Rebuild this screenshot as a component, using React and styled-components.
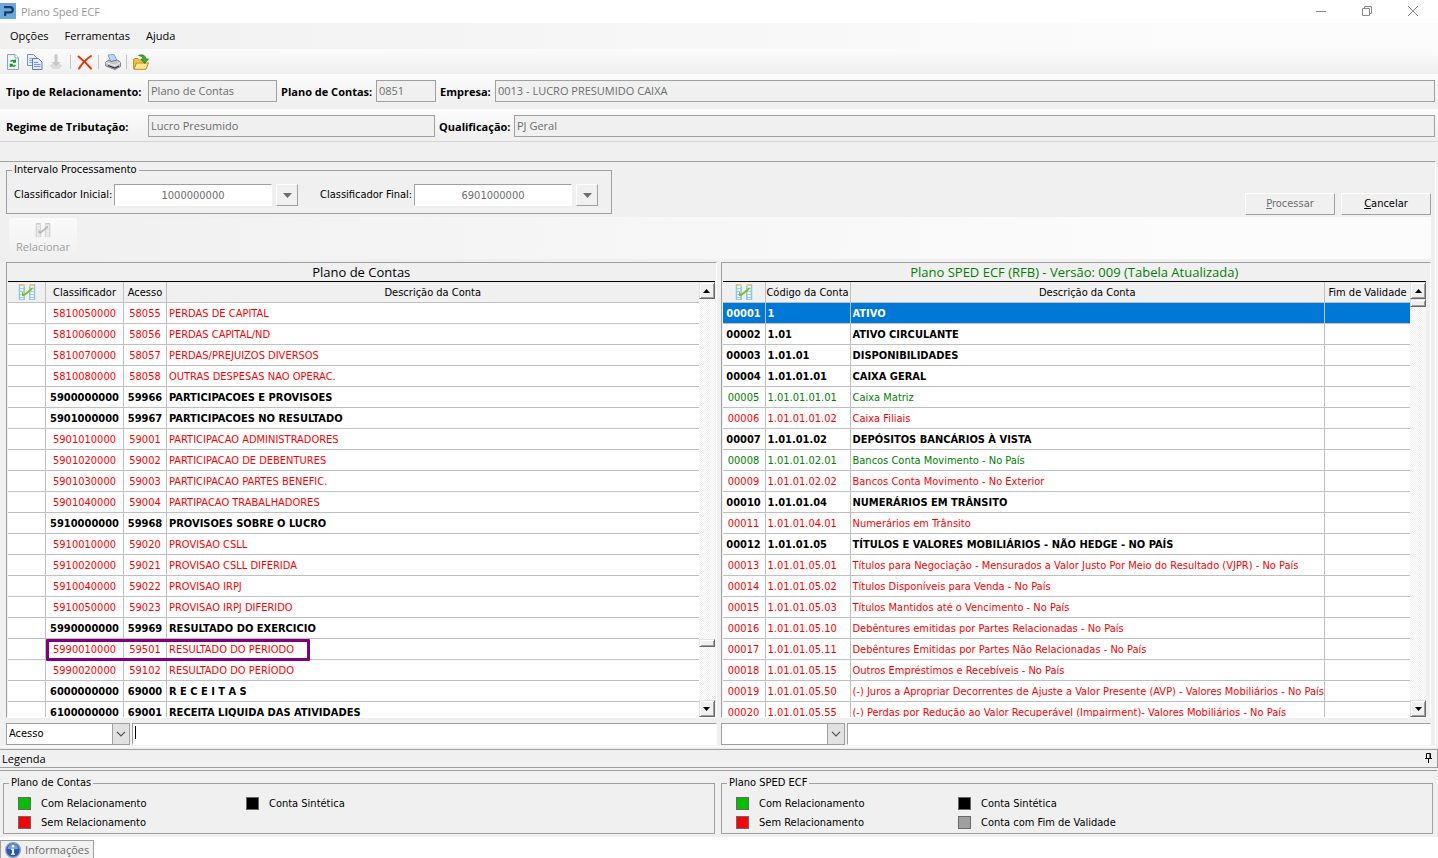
import React from "react";
import styled, { createGlobalStyle, css } from "styled-components";

const ui = `"Open Sans", "Noto Sans", sans-serif`;
const grid = `"DejaVu Sans Condensed", "DejaVu Sans", sans-serif`;
const line = "#a0a0a0";
const face = "#f0f0f0";

const GlobalStyle = createGlobalStyle`
  * { box-sizing: border-box; }
  body { margin: 0; background: #fff; }
  button, input, select { font: inherit; margin: 0; border-radius: 0; }
`;

const Window = styled.div`
  display: flex;
  flex-direction: column;
  height: 100vh;
  min-height: 600px;
  background: ${face};
  color: #000;
  font: 11px/16px ${ui};
  white-space: nowrap;
`;

/* ---------- title bar, menu, tool bar ---------- */

const TitleBar = styled.header`
  display: flex;
  align-items: center;
  height: 23px;
  padding-bottom: 1px;
  background: #fff;
  color: #999;
`;

const AppTitle = styled.h1`
  margin: 0 0 0 5px;
  padding-top: 2px;
  font-size: 11px;
  font-weight: 400;
`;

const WindowButtons = styled.div`
  display: flex;
  margin-left: auto;
  padding-right: 2px;
`;

const WindowButton = styled.button`
  display: grid;
  place-items: center;
  width: 46px;
  height: 20px;
  padding: 0;
  border: 0;
  background: none;
  color: #8a8a8a;
`;

const MenuBar = styled.nav`
  display: flex;
  align-items: center;
  height: 26px;
  padding-left: 2px;
  background: linear-gradient(90deg, #f0f0f0, #fcfcfc 85%);
`;

const MenuItem = styled.button`
  padding: 0 8px;
  border: 0;
  background: none;
  color: #000;
`;

const ToolBar = styled.div`
  display: flex;
  align-items: center;
  height: 25px;
  padding-left: 2px;
  background: linear-gradient(#fbfbfb, #efefef);
`;

const ToolButton = styled.button`
  display: grid;
  place-items: center;
  width: 22px;
  height: 22px;
  padding: 0;
  border: 0;
  background: none;
`;

const Separator = styled.span`
  width: 1px;
  height: 14px;
  margin: 0 3px 0 2px;
  background: #c4c4c4;
`;

/* ---------- company fields ---------- */

const CompanyFields = styled.section`
  display: grid;
  gap: 3px;
  border-bottom: 1px solid #d4d4d4;
`;

const FieldRow = styled.div`
  display: flex;
  gap: 4px;
  height: 32px;
  padding: 6px 3px 0 6px;
  background: linear-gradient(#fcfcfc, #efefef);
  line-height: 22px;
`;

const FieldLabel = styled.label`
  flex: none;
  width: ${(p) => p.$width}px;
  padding-top: 1px;
  font-weight: 700;
`;

const Field = styled.input`
  flex: ${(p) => (p.$width ? "none" : "1")};
  width: ${(p) => (p.$width ? `${p.$width}px` : "auto")};
  min-width: 0;
  height: 22px;
  padding: 0 2px;
  border: 1px solid ${line};
  background: ${face};
  color: #6d6d6d;
`;

/* ---------- work area ---------- */

const Workspace = styled.main`
  display: flex;
  flex: 1;
  flex-direction: column;
  min-height: 0;
  margin: 19px 2px 0 0;
  padding: 1px 4px 1px 6px;
  border-top: 1px solid ${line};
  border-right: 1px solid #fff;
  border-bottom: 1px solid #fff;
  font: 11px/14px ${grid};
`;

const RangeRow = styled.div`
  display: flex;
  align-items: flex-end;
  gap: 6px;
  height: 54px;
  padding-bottom: 2px;
`;

const Group = styled.fieldset`
  min-width: 0;
  margin: 0;
  padding: 0;
  border: 1px solid ${line};
`;

const GroupTitle = styled.legend`
  height: 14px;
  margin-left: 5px;
  padding: 0 2px;
`;

const RangeGroup = styled(Group)`
  margin: 0 auto 1px 0;
`;

const RangeFields = styled.div`
  display: flex;
  gap: 22px;
  padding: 7px 13px 7px 7px;
`;

const RangeField = styled.div`
  display: flex;
  align-items: center;
  gap: 4px;
`;

const RangeLabel = styled.label`
  width: ${(p) => p.$width}px;
`;

const RangeInput = styled.input`
  width: 158px;
  height: 22px;
  padding: 0;
  border: 1px solid #fff;
  border-top-color: ${line};
  border-left-color: ${line};
  background: #fff;
  color: #6d6d6d;
  text-align: center;
`;

const raised = css`
  border: 1px solid ${line};
  border-top-color: #fff;
  border-left-color: #fff;
  background: ${face};
`;

const DropButton = styled.button`
  display: grid;
  place-items: center;
  width: 22px;
  height: 22px;
  padding: 0;
  ${raised}
`;

const PushButton = styled.button`
  width: 90px;
  height: 22px;
  padding: 0;
  ${raised}
  color: ${(p) => (p.disabled ? "#6d6d6d" : "#000")};
`;

const RelateBar = styled.div`
  display: flex;
  flex: none;
  height: 42px;
  margin-bottom: 3px;
  padding: 1px 3px;
  background: linear-gradient(90deg, #f0f0f0, #fcfcfc 85%);
`;

const RelateButton = styled.button`
  display: flex;
  flex-direction: column;
  align-items: center;
  gap: 1px;
  width: 68px;
  padding: 4px 0 0;
  border: 0;
  border-radius: 2px;
  background: linear-gradient(#fafafa, #f0f0f0);
  color: #a0a0a0;
  font: 11px/16px ${ui};
`;

const Panels = styled.div`
  display: grid;
  flex: 1;
  grid-template-columns: 1fr 1fr;
  grid-template-rows: minmax(0, 1fr);
  gap: 4px;
  min-height: 0;
`;

const Panel = styled.section`
  display: flex;
  flex-direction: column;
  min-width: 0;
  padding-left: 1px;
  padding-right: ${(p) => p.$gutter}px;
  border: 1px solid #fff;
  border-top-color: ${line};
  border-left-color: ${line};
`;

const PanelTitle = styled.h2`
  flex: none;
  height: 19px;
  margin: 0;
  border-bottom: 1px solid #000;
  color: ${(p) => p.$color};
  font: 400 13px/19px ${ui};
  text-align: center;
`;

const PanelBody = styled.div`
  display: flex;
  flex: 1;
  min-height: 0;
`;

const TableClip = styled.div`
  flex: 1;
  min-width: 0;
  overflow: hidden;
  background: #fff;
`;

const Table = styled.table`
  width: 100%;
  border-collapse: separate;
  border-spacing: 0;
  table-layout: fixed;
`;

const HeadCell = styled.th`
  width: ${(p) => (p.$width ? `${p.$width}px` : "auto")};
  height: 21px;
  padding: ${(p) => (p.$icon ? 0 : 2)}px 0 0;
  border-right: 1px solid #c0c0c0;
  border-bottom: 1px solid #c0c0c0;
  background: ${face};
  font-weight: 400;
  &:last-child { border-right: 0; }
  svg { display: block; margin: 0 auto; }
`;

const rowColor = {
  group: "#000",
  linked: "#008000",
  unlinked: "#ff0000",
  selected: "#fff",
};

const Row = styled.tr`
  background: ${(p) => (p.$kind === "selected" ? "#0078d7" : "#fff")};
  color: ${(p) => rowColor[p.$kind]};
  font-weight: ${(p) => (p.$kind === "group" || p.$kind === "selected" ? 700 : 400)};
`;

const Cell = styled.td`
  position: relative;
  height: 21px;
  padding: 2px 0 0 ${(p) => (p.$center ? 0 : 2)}px;
  border-right: 1px solid #c0c0c0;
  border-bottom: 1px solid #c0c0c0;
  text-align: ${(p) => (p.$center ? "center" : "left")};
  &:last-child { border-right: 0; }
`;

const Highlight = styled.span`
  position: absolute;
  z-index: 1;
  top: 0;
  left: 0;
  width: 264px;
  height: 22px;
  border: 3px solid #800080;
  border-radius: 1px;
`;

const ScrollBar = styled.div`
  display: flex;
  flex: none;
  flex-direction: column;
  width: 16px;
  background: repeating-conic-gradient(#f0f0f0 0 25%, #fff 0 50%) 0 0 / 2px 2px;
`;

const bevel = css`
  border: 1px solid #696969;
  border-top-color: #e3e3e3;
  border-left-color: #e3e3e3;
  background: ${face};
  box-shadow: inset 1px 1px #fff, inset -1px -1px #a0a0a0;
`;

const ScrollArrow = styled.button`
  display: grid;
  flex: none;
  place-items: center;
  width: 16px;
  height: 17px;
  padding: 0;
  ${bevel}
`;

const ScrollThumb = styled.span`
  flex: none;
  height: 8px;
  ${bevel}
`;

const ScrollSpace = styled.span`
  flex: ${(p) => p.$share} 0 0;
`;

const SearchRow = styled.div`
  display: grid;
  flex: none;
  grid-template-columns: 1fr 1fr;
  gap: 4px;
  margin-top: 5px;
`;

const Search = styled.div`
  display: flex;
  gap: 2px;
  min-width: 0;
`;

const SelectBox = styled.div`
  position: relative;
  flex: none;
  width: 124px;
  height: 22px;
`;

const Select = styled.select`
  width: 100%;
  height: 100%;
  padding: 0 20px 0 2px;
  border: 1px solid ${line};
  appearance: none;
  background: #fff;
  color: #000;
`;

const SelectArrow = styled.span`
  position: absolute;
  top: 0;
  right: 0;
  display: grid;
  place-items: center;
  width: 18px;
  height: 22px;
  border: 1px solid ${line};
  background: #e1e1e1;
  pointer-events: none;
`;

const SearchBox = styled.div`
  position: relative;
  display: flex;
  flex: 1;
`;

const SearchInput = styled.input`
  flex: 1;
  min-width: 0;
  height: 22px;
  padding: 0 3px;
  border: 1px solid #fff;
  border-top-color: ${line};
  border-left-color: ${line};
  background: #fff;
  outline: 0;
`;

const Caret = styled.span`
  position: absolute;
  top: 3px;
  left: 3px;
  width: 1px;
  height: 13px;
  background: #000;
`;

/* ---------- legend and tab strip ---------- */

const LegendBar = styled.div`
  display: flex;
  align-items: center;
  height: 19px;
  margin: 2px 0;
  padding: 0 4px 0 2px;
  border: 1px solid ${line};
  border-left: 0;
`;

const LegendTitle = styled.h2`
  margin: 0;
  padding-top: 1px;
  font-size: 11px;
  font-weight: 400;
`;

const PinButton = styled.button`
  width: 8px;
  height: 10px;
  margin: 0 0 2px auto;
  padding: 0;
  border: 0;
  background: none;
  svg { display: block; }
`;

const LegendPanel = styled.div`
  display: grid;
  grid-template-columns: 1fr 1fr;
  gap: 6px;
  margin-right: 1px;
  padding: 5px 4px 3px 3px;
  border-top: 1px solid ${line};
  font: 11px/14px ${grid};
`;

const LegendKeys = styled.ul`
  display: grid;
  grid-template-columns: ${(p) => p.$first}px 1fr;
  grid-auto-rows: 19px;
  margin: 0;
  padding: 4px 0 1px 14px;
  list-style: none;
`;

const LegendKey = styled.li`
  display: flex;
  align-items: center;
  gap: 10px;
`;

const Swatch = styled.span`
  width: 13px;
  height: 13px;
  border: 1px solid #696969;
  background: ${(p) => p.$color};
`;

const TabStrip = styled.footer`
  display: flex;
  height: 21px;
  padding-top: 3px;
  background: #fff;
`;

const Tab = styled.button`
  display: flex;
  align-items: center;
  gap: 4px;
  height: 18px;
  padding: 0 4px;
  border: 1px solid ${line};
  border-bottom: 0;
  background: ${face};
  color: #6d6d6d;
`;

/* ---------- drawings ---------- */

const Icon = ({ size = 16, children }) => (
  <svg width={size} height={size} viewBox="0 0 16 16" fill="none" aria-hidden="true">
    {children}
  </svg>
);

const LogoIcon = () => (
  <Icon>
    <path fill="#6fa8d8" d="M0 0h16v16H0z" />
    <path d="M4 4.200h6c1.800 0 2.800.9 2.800 2.600S11.800 9.400 10 9.400H5.200V13" stroke="#0f3c75" strokeWidth="2.200" />
  </Icon>
);

const RefreshIcon = () => (
  <Icon>
    <path d="M2.500.5h7.500l3.500 3.500v11.500h-11z" fill="#eef4fc" stroke="#8f9fc4" />
    <path d="M10 .5v3.500h3.500" fill="#fff" stroke="#8f9fc4" />
    <path d="M5.500 7.500c.8-1.500 3-1.500 4.200 0M10.300 5.500v2.500H8M10.300 11c-.8 1.500-3 1.500-4.200 0M5.500 13v-2.500h2.300" stroke="#129a18" strokeWidth="1.500" />
  </Icon>
);

const CopyIcon = () => (
  <Icon>
    <path d="M.5.5h6l3 3v8h-9z" fill="#e9f0fb" stroke="#7f8fc2" />
    <path d="M2 4.500h4M2 6.500h4M2 8.500h4" stroke="#8fa9dd" />
    <path d="M5.500 4.500h6l3.500 3.500v7.500H5.500z" fill="#e2ecfb" stroke="#6579b6" />
    <path d="M7 8.500h4M7 10.500h6.500M7 12.500h6.500" stroke="#7a97d6" />
  </Icon>
);

const DownIcon = () => (
  <Icon>
    <path d="M.5 11.500L4 9.500h6l3.500 2L10 15H4z" fill="#dcdcdc" />
    <path d="M5.500.5h3v7.500h3L7 12.500 2.500 8h3z" fill="#c8c8c8" />
  </Icon>
);

const DeleteIcon = () => (
  <Icon>
    <path d="M1.500 2.500C6 6 10 10 14 14.500M14 2C9.500 5 5 9.500 2 14.500" stroke="#e8340c" strokeWidth="2" strokeLinecap="round" />
  </Icon>
);

const PrinterIcon = () => (
  <Icon>
    <path d="M3 1l6-.7L12 6.500 6 8z" fill="#b9d6fb" stroke="#6e93cc" strokeWidth=".8" />
    <path d="M.7 8L4 6l2 1.500 6-1.500 3.500 2v4.500L10 15.500.7 12z" fill="#c3c5cb" stroke="#686b73" strokeWidth=".8" />
    <path d="M1 8.500l9 3 5.500-3" stroke="#f6f6f6" />
    <path d="M3 11.500l7 2.500 4-2" stroke="#33363c" strokeWidth="1.200" />
  </Icon>
);

const FolderIcon = () => (
  <Icon>
    <path d="M.7 14.500V5.500l1-1H5l1.500 1.500h6v8.500z" fill="#f1c34b" stroke="#b5831b" />
    <path d="M1 15.300L3.500 9h12L13 15.300z" fill="#ffe78c" stroke="#c08d1d" />
    <path d="M5.500 1.500C9 0 12.500 1 13 5h2.500L11.500 9.500 8 5h2.200C10 3 8 2 5.500 1.500z" fill="#3fae2a" stroke="#1f7d16" strokeWidth=".7" />
  </Icon>
);

const RelateIcon = ({ muted }) => {
  const size = muted ? 16 : 18;
  const sheet = muted ? "#d6d6d6" : "#8cc8ec";
  const paper = muted ? "#f0f0f0" : "#f2fafe";
  const head = muted ? "#c8c8c8" : "#f5b83a";
  return (
    <svg width={size} height={size} viewBox="0 0 18 18" fill="none" aria-hidden="true">
      <path d="M1.500 1.500H6v15H1.500zM12 1.500h4.500v15H12z" fill={paper} />
      <path d="M1.500 1v16M6.200 3v14M11.800 3v14M16.500 1v16" stroke={sheet} strokeWidth="1.500" />
      <path d="M1 5.500h5M1 8.500h5M1 11.500h5M1 14.500h5M1 16.500h5.500M12 5.500h5M12 8.500h5M12 11.500h5M12 14.500h5M11.500 16.500H17" stroke={sheet} strokeWidth=".8" />
      <path d="M1.500 2h5M11.500 2h5" stroke={head} strokeWidth="1.600" />
      <path d="M4 8.500l2 2.500L14.500 4v2.500L6.500 13H4z" fill={muted ? "#b4b4b4" : "#86bd1c"} />
    </svg>
  );
};

const InfoIcon = () => (
  <Icon>
    <circle cx="8" cy="8" r="7.300" fill="#2457b8" stroke="#8f9bb3" strokeWidth="1.400" />
    <path d="M2.500 6.500a5.600 5.600 0 0 1 11 0c-3 1.500-8 1.500-11 0z" fill="#6f9be6" />
    <circle cx="8" cy="4.300" r="1.300" fill="#fff" />
    <path d="M6.200 6.800H9v4.700h1v1.200H6v-1.200h1V8h-.8z" fill="#fff" />
  </Icon>
);

const Triangle = ({ up, width = 7, color = "#000" }) => (
  <svg width={width} height={width === 7 ? 4 : 5} viewBox="0 0 8 4" preserveAspectRatio="none" aria-hidden="true">
    <path d={up ? "M0 4l4-4 4 4z" : "M0 0l4 4 4-4z"} fill={color} />
  </svg>
);

const Chevron = () => (
  <svg width="10" height="6" viewBox="0 0 10 6" fill="none" aria-hidden="true">
    <path d="M1 .8l4 4 4-4" stroke="#505050" strokeWidth="1.200" />
  </svg>
);

/* ---------- data ---------- */

const accounts = [
  ["5810050000", "58055", "PERDAS DE CAPITAL"],
  ["5810060000", "58056", "PERDAS CAPITAL/ND"],
  ["5810070000", "58057", "PERDAS/PREJUIZOS DIVERSOS"],
  ["5810080000", "58058", "OUTRAS DESPESAS NAO OPERAC."],
  ["5900000000", "59966", "PARTICIPACOES E PROVISOES", "group"],
  ["5901000000", "59967", "PARTICIPACOES NO RESULTADO", "group"],
  ["5901010000", "59001", "PARTICIPACAO ADMINISTRADORES"],
  ["5901020000", "59002", "PARTICIPACAO DE DEBENTURES"],
  ["5901030000", "59003", "PARTICIPACAO PARTES BENEFIC."],
  ["5901040000", "59004", "PARTIPACAO TRABALHADORES"],
  ["5910000000", "59968", "PROVISOES SOBRE O LUCRO", "group"],
  ["5910010000", "59020", "PROVISAO CSLL"],
  ["5910020000", "59021", "PROVISAO CSLL DIFERIDA"],
  ["5910040000", "59022", "PROVISAO IRPJ"],
  ["5910050000", "59023", "PROVISAO IRPJ DIFERIDO"],
  ["5990000000", "59969", "RESULTADO DO EXERCICIO", "group"],
  ["5990010000", "59501", "RESULTADO DO PERIODO"],
  ["5990020000", "59102", "RESULTADO DO PERÍODO"],
  ["6000000000", "69000", "R E C E I T A S", "group"],
  ["6100000000", "69001", "RECEITA LIQUIDA DAS ATIVIDADES", "group"],
];

const highlighted = "5990010000";

const spedAccounts = [
  ["00001", "1", "ATIVO", "selected"],
  ["00002", "1.01", "ATIVO CIRCULANTE", "group"],
  ["00003", "1.01.01", "DISPONIBILIDADES", "group"],
  ["00004", "1.01.01.01", "CAIXA GERAL", "group"],
  ["00005", "1.01.01.01.01", "Caixa Matriz", "linked"],
  ["00006", "1.01.01.01.02", "Caixa Filiais"],
  ["00007", "1.01.01.02", "DEPÓSITOS BANCÁRIOS À VISTA", "group"],
  ["00008", "1.01.01.02.01", "Bancos Conta Movimento - No País", "linked"],
  ["00009", "1.01.01.02.02", "Bancos Conta Movimento - No Exterior"],
  ["00010", "1.01.01.04", "NUMERÁRIOS EM TRÂNSITO", "group"],
  ["00011", "1.01.01.04.01", "Numerários em Trânsito"],
  ["00012", "1.01.01.05", "TÍTULOS E VALORES MOBILIÁRIOS - NÃO HEDGE - NO PAÍS", "group"],
  ["00013", "1.01.01.05.01", "Títulos para Negociação - Mensurados a Valor Justo Por Meio do Resultado (VJPR) - No País"],
  ["00014", "1.01.01.05.02", "Títulos Disponíveis para Venda - No País"],
  ["00015", "1.01.01.05.03", "Títulos Mantidos até o Vencimento - No País"],
  ["00016", "1.01.01.05.10", "Debêntures emitidas por Partes Relacionadas - No País"],
  ["00017", "1.01.01.05.11", "Debêntures Emitidas por Partes Não Relacionadas - No País"],
  ["00018", "1.01.01.05.15", "Outros Empréstimos e Recebíveis - No País"],
  ["00019", "1.01.01.05.50", "(-) Juros a Apropriar Decorrentes de Ajuste a Valor Presente (AVP) -  Valores Mobiliários - No País"],
  ["00020", "1.01.01.05.55", "(-) Perdas por Redução ao Valor Recuperável (Impairment)- Valores Mobiliários - No País"],
];

/* ---------- composed parts ---------- */

const LabeledField = ({ id, label, labelWidth, width, value }) => (
  <>
    <FieldLabel htmlFor={id} $width={labelWidth}>{label}</FieldLabel>
    <Field id={id} $width={width} value={value} disabled readOnly />
  </>
);

const ClassifierField = ({ id, label, labelWidth, value }) => (
  <RangeField>
    <RangeLabel htmlFor={id} $width={labelWidth}>{label}</RangeLabel>
    <RangeInput id={id} value={value} disabled readOnly />
    <DropButton type="button" aria-label={`Escolher ${label}`}>
      <Triangle width={9} color="#6d6d6d" />
    </DropButton>
  </RangeField>
);

const Scroll = ({ before, after }) => (
  <ScrollBar>
    <ScrollArrow type="button" aria-label="Rolar para cima"><Triangle up /></ScrollArrow>
    <ScrollSpace $share={before} />
    <ScrollThumb />
    <ScrollSpace $share={after} />
    <ScrollArrow type="button" aria-label="Rolar para baixo"><Triangle /></ScrollArrow>
  </ScrollBar>
);

const SearchBar = ({ id, option, caret }) => (
  <Search>
    <SelectBox>
      <Select aria-label={`Campo de busca ${id}`} defaultValue={option}>
        <option value={option}>{option}</option>
      </Select>
      <SelectArrow><Chevron /></SelectArrow>
    </SelectBox>
    <SearchBox>
      <SearchInput type="text" aria-label={`Buscar ${id}`} />
      {caret && <Caret />}
    </SearchBox>
  </Search>
);

const Legend = ({ title, first, keys }) => (
  <Group>
    <GroupTitle>{title}</GroupTitle>
    <LegendKeys $first={first}>
      {keys.map(([color, text], i) => (
        <LegendKey key={i}>
          <Swatch $color={color} />
          {text}
        </LegendKey>
      ))}
    </LegendKeys>
  </Group>
);

export default function App() {
  return (
    <Window>
      <GlobalStyle />
      <TitleBar>
        <LogoIcon />
        <AppTitle>Plano Sped ECF</AppTitle>
        <WindowButtons>
          <WindowButton type="button" aria-label="Minimizar">
            <svg width="10" height="10" viewBox="0 0 10 10"><path d="M0 5.500h10" stroke="currentColor" /></svg>
          </WindowButton>
          <WindowButton type="button" aria-label="Restaurar">
            <svg width="10" height="10" viewBox="0 0 10 10" fill="none" stroke="currentColor"><path d="M.5 2.500h7v7h-7zM2.500 2.500v-2h7v7h-2" /></svg>
          </WindowButton>
          <WindowButton type="button" aria-label="Fechar">
            <svg width="10" height="10" viewBox="0 0 10 10" stroke="currentColor"><path d="M0 0l10 10M10 0L0 10" /></svg>
          </WindowButton>
        </WindowButtons>
      </TitleBar>

      <MenuBar>
        <MenuItem type="button">Opções</MenuItem>
        <MenuItem type="button">Ferramentas</MenuItem>
        <MenuItem type="button">Ajuda</MenuItem>
      </MenuBar>

      <ToolBar>
        <ToolButton type="button" aria-label="Atualizar"><RefreshIcon /></ToolButton>
        <ToolButton type="button" aria-label="Copiar"><CopyIcon /></ToolButton>
        <ToolButton type="button" aria-label="Importar" disabled><DownIcon /></ToolButton>
        <Separator />
        <ToolButton type="button" aria-label="Excluir"><DeleteIcon /></ToolButton>
        <Separator />
        <ToolButton type="button" aria-label="Imprimir"><PrinterIcon /></ToolButton>
        <Separator />
        <ToolButton type="button" aria-label="Abrir"><FolderIcon /></ToolButton>
      </ToolBar>

      <CompanyFields>
        <FieldRow>
          <LabeledField id="tipo" label="Tipo de Relacionamento:" labelWidth={138} width={129} value="Plano de Contas" />
          <LabeledField id="plano" label="Plano de Contas:" labelWidth={91} width={60} value="0851" />
          <LabeledField id="empresa" label="Empresa:" labelWidth={51} value="0013 - LUCRO PRESUMIDO CAIXA" />
        </FieldRow>
        <FieldRow>
          <LabeledField id="regime" label="Regime de Tributação:" labelWidth={138} width={287} value="Lucro Presumido" />
          <LabeledField id="qualificacao" label="Qualificação:" labelWidth={71} value="PJ Geral" />
        </FieldRow>
      </CompanyFields>

      <Workspace>
        <RangeRow>
          <RangeGroup>
            <GroupTitle>Intervalo Processamento</GroupTitle>
            <RangeFields>
              <ClassifierField id="inicial" label="Classificador Inicial:" labelWidth={96} value="1000000000" />
              <ClassifierField id="final" label="Classificador Final:" labelWidth={90} value="6901000000" />
            </RangeFields>
          </RangeGroup>
          <PushButton type="button" disabled><u>P</u>rocessar</PushButton>
          <PushButton type="button"><u>C</u>ancelar</PushButton>
        </RangeRow>

        <RelateBar>
          <RelateButton type="button" disabled>
            <RelateIcon muted />
            Relacionar
          </RelateButton>
        </RelateBar>

        <Panels>
          <Panel $gutter={1}>
            <PanelTitle $color="#000">Plano de Contas</PanelTitle>
            <PanelBody>
              <TableClip>
                <Table>
                  <thead>
                    <tr>
                      <HeadCell $width={38} $icon><RelateIcon /></HeadCell>
                      <HeadCell $width={78}>Classificador</HeadCell>
                      <HeadCell $width={43}>Acesso</HeadCell>
                      <HeadCell>Descrição da Conta</HeadCell>
                    </tr>
                  </thead>
                  <tbody>
                    {accounts.map(([code, access, name, kind = "unlinked"]) => (
                      <Row key={code} $kind={kind}>
                        <Cell />
                        <Cell $center>
                          {code}
                          {code === highlighted && <Highlight />}
                        </Cell>
                        <Cell $center>{access}</Cell>
                        <Cell>{name}</Cell>
                      </Row>
                    ))}
                  </tbody>
                </Table>
              </TableClip>
              <Scroll before={340} after={53} />
            </PanelBody>
          </Panel>

          <Panel $gutter={4}>
            <PanelTitle $color="#008000">Plano SPED ECF (RFB) - Versão: 009 (Tabela Atualizada)</PanelTitle>
            <PanelBody>
              <TableClip>
                <Table>
                  <thead>
                    <tr>
                      <HeadCell $width={43} $icon><RelateIcon /></HeadCell>
                      <HeadCell $width={85}>Código da Conta</HeadCell>
                      <HeadCell>Descrição da Conta</HeadCell>
                      <HeadCell $width={85}>Fim de Validade</HeadCell>
                    </tr>
                  </thead>
                  <tbody>
                    {spedAccounts.map(([order, code, name, kind = "unlinked"]) => (
                      <Row key={order} $kind={kind}>
                        <Cell $center>{order}</Cell>
                        <Cell>{code}</Cell>
                        <Cell>{name}</Cell>
                        <Cell />
                      </Row>
                    ))}
                  </tbody>
                </Table>
              </TableClip>
              <Scroll before={0} after={1} />
            </PanelBody>
          </Panel>
        </Panels>

        <SearchRow>
          <SearchBar id="plano de contas" option="Acesso" caret />
          <SearchBar id="plano SPED" option="" />
        </SearchRow>
      </Workspace>

      <LegendBar>
        <LegendTitle>Legenda</LegendTitle>
        <PinButton type="button" aria-label="Fixar">
          <svg width="8" height="10" viewBox="0 0 8 10" fill="none" stroke="#000">
            <path d="M1.500 5.500v-5h4v5M0 5.500h7M3.500 6v4M5 1v5" />
          </svg>
        </PinButton>
      </LegendBar>

      <LegendPanel>
        <Legend
          title="Plano de Contas"
          first={228}
          keys={[
            ["#00c000", "Com Relacionamento"],
            ["#000", "Conta Sintética"],
            ["#ff0000", "Sem Relacionamento"],
          ]}
        />
        <Legend
          title="Plano SPED ECF"
          first={222}
          keys={[
            ["#00c000", "Com Relacionamento"],
            ["#000", "Conta Sintética"],
            ["#ff0000", "Sem Relacionamento"],
            ["#a0a0a0", "Conta com Fim de Validade"],
          ]}
        />
      </LegendPanel>

      <TabStrip>
        <Tab type="button">
          <InfoIcon />
          Informações
        </Tab>
      </TabStrip>
    </Window>
  );
}
